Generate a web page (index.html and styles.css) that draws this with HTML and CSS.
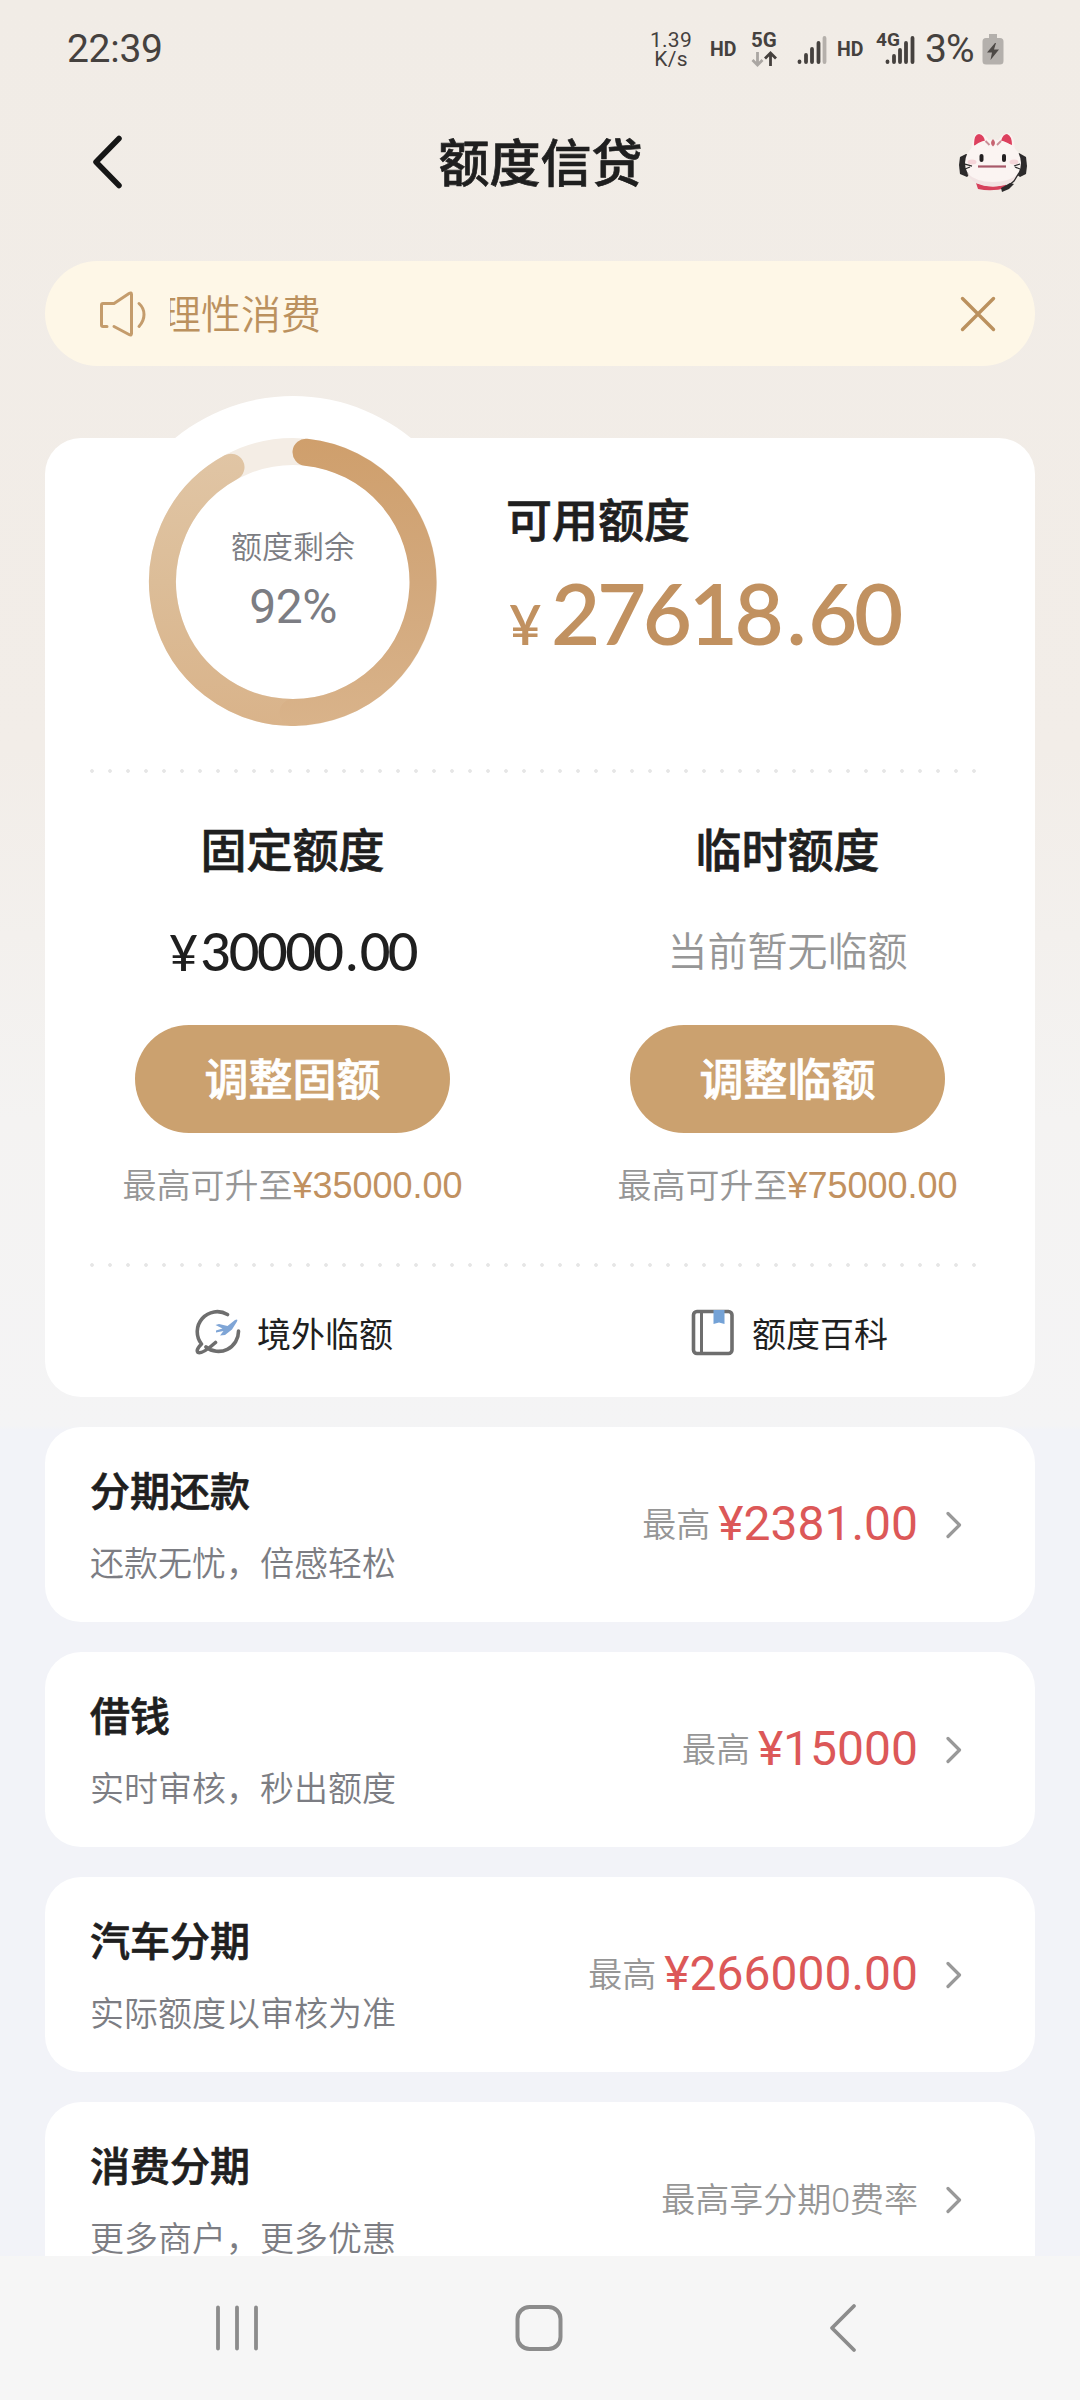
FILE: index.html
```
<!DOCTYPE html>
<html lang="zh-CN">
<head>
<meta charset="utf-8">
<title>额度信贷</title>
<link rel="stylesheet" href="styles.css">
</head>
<body>
<div class="screen">
  <header class="status">
    <span class="status-time">22:39</span>
    <div class="status-right">
      <div class="net-speed"><span>1.39</span><span>K/s</span></div>
      <span class="hd">HD</span>
      <div class="net-5g">
        <span>5G</span>
        <svg width="26" height="16" viewBox="0 0 26 16" fill="none" stroke-width="2.8"><path d="M6.500 1V14M1.500 9L6.500 14L11.500 9" stroke="#aaa6a2"/><path d="M19.500 15V2M14 7.500L19.500 2L25 7.500" stroke="#45413e"/></svg>
      </div>
      <svg class="bars-one" width="30" height="30" viewBox="0 0 30 30" stroke="#45413e" stroke-width="3.800" stroke-linecap="round"><path d="M2.500 26.500V27M9 20V27M15 14V27M21.500 8V27"/><path d="M27.500 3V27" stroke="#b5b0ab"/></svg>
      <span class="hd hd-two">HD</span>
      <div class="net-4g">
        <span>4G</span>
        <svg width="30" height="30" viewBox="0 0 30 30" stroke="#45413e" stroke-width="3.800" stroke-linecap="round"><path d="M2.500 26.500V27M9 21V27M15 15V27M21 8V27M27.500 3V27"/></svg>
      </div>
      <span class="battery-text">3%</span>
      <svg class="battery" width="22" height="31" viewBox="0 0 22 31"><path d="M7 0H15V4H18Q21.500 4 21.500 7.500V27Q21.500 30.500 18 30.500H4Q.500 30.500 .500 27V7.500Q.500 4 4 4H7Z" fill="#b4b0ac"/><path d="M13 9L5 18.500H10L8.500 26L17 15.500H12L14 9Z" fill="#4d4946"/></svg>
    </div>
  </header>

  <div class="titlebar">
    <svg class="back" width="32" height="56" viewBox="0 0 32 56" fill="none" stroke="#161616" stroke-width="5.500" stroke-linecap="round" stroke-linejoin="round"><path d="M29 4.500L6 28L29 51.500"/></svg>
    <h1>额度信贷</h1>
    <svg class="mascot" width="70" height="60" viewBox="0 0 70 60">
      <path d="M8 22L2 25L1 33L2 42L9 45L13 41V23Z" fill="#2c2a2b"/>
      <path d="M61 21L68 25L69 34L68 42L62 45L58 42V24Z" fill="#2c2a2b"/>
      <path d="M18 51Q34 56 48 51V56Q34 60 20 57Z" fill="#d6415c"/>
      <path d="M13 22Q14 1 21 1Q28 2 31 9H40Q44 1 50 1Q57 2 57 22Z" fill="#fbf1ef"/>
      <path d="M16 13Q16 2 21 2Q26 3 27 9L17 14Z" fill="#dd405e"/>
      <path d="M43 9Q45 2 49 2Q54 4 54 13Z" fill="#dd405e"/>
      <ellipse cx="35" cy="31" rx="28" ry="23.500" fill="#fbf4f2"/>
      <path d="M9 41Q15 54.500 35 54.500Q55 54.500 61 41Q52 50 35 50Q18 50 9 41Z" fill="#f2e4e4"/>
      <path d="M35 7Q31 11 35 14.500Q39 11 35 7Z" fill="#c76472"/>
      <path d="M27.500 9L31.500 13M43 9L39 13" stroke="#c98d96" stroke-width="1.800"/>
      <ellipse cx="14" cy="30" rx="4.500" ry="2.500" fill="#f5d5d9"/><ellipse cx="56" cy="30" rx="4.500" ry="2.500" fill="#f5d5d9"/>
      <rect x="21.500" y="22" width="4" height="8" rx="2" fill="#242022"/><rect x="44" y="22" width="4" height="8" rx="2" fill="#242022"/>
      <path d="M20 34.500H48" fill="none" stroke="#a8596a" stroke-width="2.200"/>
      <path d="M7 32L14 34M7 37L12 35M62 32L56 34M62 37L57 35M61 41L56 49L50 54" fill="none" stroke="#2c2a2b" stroke-width="1.300"/>
      <path d="M43 56L52 51L56 52L51 57L44 60Z" fill="#2c2a2b"/>
    </svg>
  </div>

  <div class="notice">
    <svg width="48" height="48" viewBox="0 0 48 48" fill="none" stroke="#c49c6c" stroke-width="3" stroke-linecap="round" stroke-linejoin="round"><path d="M8 36.500H4Q2.500 36.500 2.500 35V15Q2.500 13.500 4 13.500H15L30 3.500Q32.500 2 32.500 4.500V43.500Q32.500 46 30 44.500L15 36.500M40 13.500Q45 18 45 24.500Q45 31 40 36.500"/></svg>
    <div class="notice-window"><span>理性消费</span></div>
    <svg width="36" height="36" viewBox="0 0 36 36" stroke="#bb915e" stroke-width="3.400" stroke-linecap="round"><path d="M2.500 2.500L33.500 33.500M33.500 2.500L2.500 33.500"/></svg>
  </div>

  <main class="content">
    <section class="card credit">
      <div class="overview">
        <div class="gauge">
          <svg width="372" height="372" viewBox="0 0 372 372" fill="none">
            <defs>
              <linearGradient id="gr" gradientUnits="userSpaceOnUse" x1="0" y1="42" x2="0" y2="330"><stop stop-color="#cf9f6c"/><stop offset=".5" stop-color="#d2a87c"/><stop offset="1" stop-color="#d9b38a"/></linearGradient>
              <linearGradient id="gl" gradientUnits="userSpaceOnUse" x1="0" y1="42" x2="0" y2="330"><stop stop-color="#e1c6a6"/><stop offset=".5" stop-color="#dcbd98"/><stop offset="1" stop-color="#d9b38a"/></linearGradient>
            </defs>
            <circle cx="186" cy="186" r="130.500" stroke="#f4ede5" stroke-width="27"/>
            <path d="M186 316.500A130.500 130.500 0 0 1 124 71.200" stroke="url(#gl)" stroke-width="27" stroke-linecap="round"/>
            <path d="M199 56.200A130.500 130.500 0 0 1 186 316.500" stroke="url(#gr)" stroke-width="27" stroke-linecap="round"/>
          </svg>
          <div class="gauge-text"><span>额度剩余</span><strong>92%</strong></div>
        </div>
        <div class="available">
          <h2>可用额度</h2>
          <div class="available-amount"><span class="yen">¥</span><span>27618<i>.</i>60</span></div>
        </div>
      </div>
      <div class="dots"></div>
      <div class="limits">
        <div class="limit">
          <h2>固定额度</h2>
          <p class="limit-value"><b>¥</b>30000<i>.</i>00</p>
          <button>调整固额</button>
          <p class="limit-max">最高可升至<span>¥35000.00</span></p>
        </div>
        <div class="limit">
          <h2>临时额度</h2>
          <p class="limit-none">当前暂无临额</p>
          <button>调整临额</button>
          <p class="limit-max">最高可升至<span>¥75000.00</span></p>
        </div>
      </div>
      <div class="dots"></div>
      <div class="links">
        <a class="link">
          <svg width="48" height="48" viewBox="0 0 48 48" fill="none" stroke="#6e6e6e" stroke-width="3.600" stroke-linecap="round" stroke-linejoin="round"><path d="M33.500 6.500A20 20 0 0 0 7.500 36Q1.500 42 4 44.500Q8 46.500 21.500 34.500M12 39A20 20 0 0 0 44.500 23"/><path d="M21.500 17L25 16L33.500 18L41 12Q44.500 10.500 43 13.500L38 21.500L31 27L26 27.500L29.500 23L22 24.500V22.500L28.500 20.500Z" fill="#7fa5d6" stroke="none"/></svg>
          <span>境外临额</span>
        </a>
        <a class="link">
          <svg width="48" height="48" viewBox="0 0 48 48" fill="none" stroke="#6e6e6e" stroke-width="3.600"><rect x="4.500" y="3.500" width="38.500" height="42" rx="3.500"/><path d="M12.500 4V45" stroke-width="3"/><path d="M24.500 2H35.500V16L30 14.500L24.500 16Z" fill="#74a2d6" stroke="none"/></svg>
          <span>额度百科</span>
        </a>
      </div>
    </section>

    <section class="card item">
      <div class="item-text"><h3>分期还款</h3><p>还款无忧，倍感轻松</p></div>
      <div class="item-value"><span>最高</span><strong>¥2381.00</strong></div>
      <svg class="chev" width="16" height="28" viewBox="0 0 16 28"><path d="M2 2.500L13.500 14L2 25.500"/></svg>
    </section>
    <section class="card item">
      <div class="item-text"><h3>借钱</h3><p>实时审核，秒出额度</p></div>
      <div class="item-value"><span>最高</span><strong>¥15000</strong></div>
      <svg class="chev" width="16" height="28" viewBox="0 0 16 28"><path d="M2 2.500L13.500 14L2 25.500"/></svg>
    </section>
    <section class="card item">
      <div class="item-text"><h3>汽车分期</h3><p>实际额度以审核为准</p></div>
      <div class="item-value"><span>最高</span><strong>¥266000.00</strong></div>
      <svg class="chev" width="16" height="28" viewBox="0 0 16 28"><path d="M2 2.500L13.500 14L2 25.500"/></svg>
    </section>
    <section class="card item">
      <div class="item-text"><h3>消费分期</h3><p>更多商户，更多优惠</p></div>
      <div class="item-value"><span>最高享分期0费率</span></div>
      <svg class="chev" width="16" height="28" viewBox="0 0 16 28"><path d="M2 2.500L13.500 14L2 25.500"/></svg>
    </section>
  </main>

  <nav class="navbar">
    <svg width="48" height="48" viewBox="0 0 48 48" stroke="#8c8c8c" stroke-width="3.800" stroke-linecap="round"><path d="M5 3.500V44.500M24 3.500V44.500M43 3.500V44.500"/></svg>
    <svg class="home" width="50" height="50" viewBox="0 0 50 50" fill="none" stroke="#8c8c8c" stroke-width="4"><rect x="3.500" y="4" width="43" height="42" rx="12"/></svg>
    <svg width="30" height="50" viewBox="0 0 30 50" fill="none" stroke="#8c8c8c" stroke-width="3.800" stroke-linecap="round" stroke-linejoin="round"><path d="M26 3L4 25L26 47"/></svg>
  </nav>
</div>
</body>
</html>
```
FILE: styles.css
```
* { box-sizing: border-box; margin: 0; padding: 0; }

body {
  width: 1080px;
  height: 2400px;
  font-family: Roboto, "Noto Sans CJK SC", sans-serif;
  color: #1f1f1f;
}

svg { display: block; flex: none; }
i { font-style: normal; }
h1, h2, h3 { font-weight: 500; -webkit-text-stroke: .7px currentColor; }

.screen {
  display: flex;
  flex-direction: column;
  height: 2400px;
  overflow: hidden;
  background: linear-gradient(#f1ece6 0, #f2ede8 750px, #f4f3f2 1120px, #f4f4f5 1426px, #f2f3f8 1430px);
}

/* Status bar */
.status {
  display: flex;
  flex: none;
  align-items: center;
  justify-content: space-between;
  height: 96px;
  padding: 2px 76px 0 67px;
  color: #45413e;
}
.status-time { font-size: 39px; letter-spacing: -.3px; }
.status-right { display: flex; align-items: center; }
.net-speed { display: flex; flex-direction: column; align-items: center; width: 44px; font-size: 21px; line-height: 19px; letter-spacing: .3px; padding-top: 1px; }
.hd { margin-left: 17px; font-size: 19.5px; font-weight: 700; width: 28px; }
.net-5g { display: flex; flex-direction: column; gap: 2px; width: 26px; margin-left: 13px; font-size: 20.5px; font-weight: 700; line-height: 18px; }
.bars-one { margin: 2px 0 0 20px; }
.hd-two { margin-left: 10px; }
.net-4g { display: flex; align-items: center; margin-left: 11px; font-size: 19px; font-weight: 700; }
.net-4g span { width: 9px; margin-top: -19px; white-space: nowrap; }
.net-4g svg { margin-top: 2px; }
.battery-text { margin-left: 10px; font-size: 39px; width: 57px; letter-spacing: -1px; }

/* Title bar */
.titlebar {
  display: flex;
  flex: none;
  align-items: center;
  justify-content: space-between;
  height: 132px;
  padding: 0 52px 0 90px;
}
.titlebar h1 { margin-left: 1px; padding-top: 6px; font-size: 51px; line-height: 60px; }

/* Notice */
.notice {
  display: flex;
  flex: none;
  align-items: center;
  height: 105px;
  margin: 33px 45px 0;
  padding: 0 39px 0 54px;
  border-radius: 53px;
  background: #fef7e7;
  color: #c49c6c;
}
.notice-window { flex: 1; margin-left: 23px; overflow: hidden; }
.notice-window span { display: block; margin-left: -9px; padding-top: 5px; font-size: 40px; line-height: 56px; font-weight: 350; color: #bb915e; }

/* Content */
.content {
  display: flex;
  flex: 1;
  flex-direction: column;
  gap: 30px;
  min-height: 0;
  margin-top: 72px;
  padding: 0 45px;
}
.card { flex: none; border-radius: 36px; background: #fff; }

.credit { height: 959px; }
.overview { display: flex; height: 331px; }
.gauge { display: grid; place-items: center; width: 372px; height: 372px; margin: -42px 0 0 62px; border-radius: 50%; background: #fff; }
.gauge > * { grid-area: 1 / 1; }
.gauge-text { display: flex; flex-direction: column; align-items: center; color: #7c7d83; }
.gauge-text span { font-size: 31px; line-height: 46px; font-weight: 350; }
.gauge-text strong { padding-top: 3px; font-size: 48px; line-height: 66px; font-weight: 400; letter-spacing: -.5px; }
.available { padding: 54px 0 0 27px; }
.available h2 { font-size: 46px; line-height: 58px; }
.available-amount { display: flex; align-items: baseline; margin-top: 17px; padding-left: 3px; font-family: Lato, sans-serif; font-size: 85px; line-height: 90px; font-weight: 600; letter-spacing: -3.4px; color: #c19160; }
.available-amount i { margin: 0 5px 0 6px; }
.available-amount .yen { width: 42px; font-size: 56px; }

.dots {
  height: 4px;
  margin: 0 57px 0 38px;
  background: radial-gradient(circle at center, #e6e6e6 1.5px, transparent 2.200px) 0 0 / 18px 4px repeat-x;
}

.limits { display: grid; grid-template-columns: 1fr 1fr; height: 490px; }
.limit { display: flex; flex-direction: column; align-items: center; padding-top: 49px; }
.limit h2 { font-size: 46px; line-height: 58px; }
.limit-value, .limit-none { margin-top: 43px; height: 60px; line-height: 60px; }
.limit-value { font-family: Lato, sans-serif; font-size: 53px; line-height: 56px; font-weight: 500; letter-spacing: -2.500px; }
.limit-value b { margin-right: 5px; font-size: 50px; font-weight: 500; }
.limit-value i { margin: 0 4px; }
.limit-none { font-size: 40px; font-weight: 350; color: #969696; }
.limit button { width: 315px; height: 108px; margin-top: 42px; padding-top: 5px; border: 0; border-radius: 54px; background: #cba16f; color: #fff; font: 500 44px/103px Roboto, "Noto Sans CJK SC", sans-serif; -webkit-text-stroke: .7px #fff; }
.limit-max { margin-top: 28px; font-size: 34px; line-height: 50px; font-weight: 350; color: #969696; }
.limit-max span { font-family: "Liberation Sans", sans-serif; font-size: 36px; font-weight: 400; color: #c19160; }

.links { display: grid; grid-template-columns: 1fr 1fr; height: 130px; }
.link { display: flex; align-items: center; gap: 15px; padding: 0 0 0 149px; }
.link span { padding-top: 5px; font-size: 34px; line-height: 50px; }

/* List rows */
.item { display: flex; align-items: center; height: 195px; padding: 0 73px 0 45px; }
.item-text { flex: 1; padding-top: 5px; }
.item-text h3 { font-size: 40px; line-height: 60px; }
.item-text p { margin-top: 13px; font-size: 34px; line-height: 56px; font-weight: 350; color: #7c7d83; }
.item-value { display: flex; align-items: center; gap: 8px; margin-right: 28px; font-size: 34px; line-height: 56px; font-weight: 350; color: #969696; }
.item-value strong { padding-bottom: 2px; font-size: 48px; font-weight: 400; color: #dc5858; }
.chev { fill: none; stroke: #999; stroke-width: 3.200; stroke-linecap: round; stroke-linejoin: round; }

/* System navigation */
.navbar {
  display: flex;
  flex: none;
  position: relative;
  align-items: center;
  justify-content: space-between;
  height: 144px;
  padding: 0 222px 0 213px;
  background: #f6f6f6;
}
.home { margin-right: 11px; }
```
